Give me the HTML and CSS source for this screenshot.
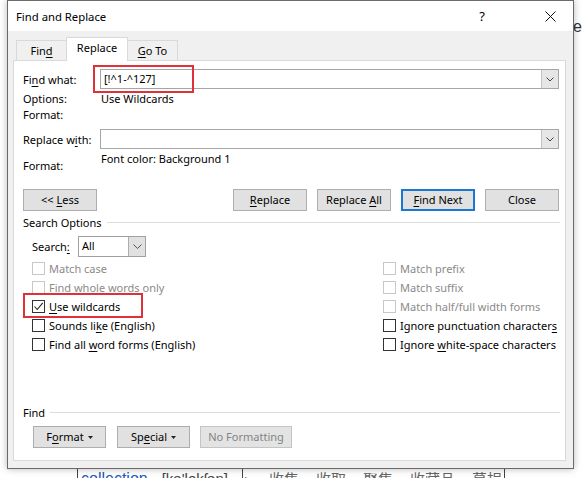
FILE: index.html
```html
<!DOCTYPE html>
<html>
<head>
<meta charset="utf-8">
<link rel="stylesheet" href="styles.css">
</head>
<body>
<div class="desktop">
  <div class="doc-top">ea</div>
  <div class="doc-bottom">
    <span class="doc-bar"></span>
    <span class="doc-link">collection</span>
    <span class="doc-phon">[kə'lekʃən]</span>
    <span class="doc-bar"></span>
    <span class="doc-arrow">▸</span>
    <span class="doc-cjk">收集</span>
    <span class="doc-cjk">收取</span>
    <span class="doc-cjk">聚集</span>
    <span class="doc-cjk">收藏品</span>
    <span class="doc-cjk">募捐</span>
    <span class="doc-bar"></span>
  </div>

  <div class="dialog">
    <div class="titlebar">
      <span class="title">Find and Replace</span>
      <span class="tb-help">?</span>
      <span class="tb-close"><svg width="11" height="11" viewBox="0 0 11 11"><path d="M0.5 0.5L10.5 10.5M10.5 0.5L0.5 10.5" stroke="#111" stroke-width="1"/></svg></span>
    </div>
    <div class="body">
      <div class="tabs">
        <div class="tab tab-find"><span>Fin<u>d</u></span></div>
        <div class="tab tab-active"><span>Replace</span></div>
        <div class="tab tab-goto"><span><u>G</u>o To</span></div>
      </div>
      <div class="page">
        <div class="mark mark-find"></div>
        <div class="mark mark-wild"></div>

        <div class="field-row">
          <span class="lbl">Fi<u>n</u>d what:</span>
          <div class="combo">
            <span class="combo-text">[!^1-^127]</span>
            <span class="combo-btn"><svg width="8" height="5" viewBox="0 0 8 5"><path d="M0.5 0.5L4 4L7.5 0.5" fill="none" stroke="#444" stroke-width="1"/></svg></span>
          </div>
        </div>
        <div class="info-row"><span class="lbl">Options:</span><span class="val">Use Wildcards</span></div>
        <div class="info-row"><span class="lbl">Format:</span><span class="val"></span></div>

        <div class="field-row field-replace">
          <span class="lbl">Replace w<u>i</u>th:</span>
          <div class="combo">
            <span class="combo-text"></span>
            <span class="combo-btn"><svg width="8" height="5" viewBox="0 0 8 5"><path d="M0.5 0.5L4 4L7.5 0.5" fill="none" stroke="#444" stroke-width="1"/></svg></span>
          </div>
        </div>
        <div class="format-row"><span class="lbl">Format:</span><span class="val">Font color: Background 1</span></div>

        <div class="btn-row">
          <button class="btn"><span>&lt;&lt; <u>L</u>ess</span></button>
          <div class="btn-group">
            <button class="btn"><span><u>R</u>eplace</span></button>
            <button class="btn"><span>Replace <u>A</u>ll</span></button>
            <button class="btn btn-default"><span><u>F</u>ind Next</span></button>
            <button class="btn"><span>Close</span></button>
          </div>
        </div>

        <div class="group-head"><span>Search Options</span></div>

        <div class="search-row">
          <span class="search-lbl">Search<u>:</u></span>
          <div class="combo combo-small">
            <span class="combo-text">All</span>
            <span class="combo-btn"><svg width="9" height="5" viewBox="0 0 9 5"><path d="M0.5 0.5L4.5 4.5L8.5 0.5" fill="none" stroke="#555" stroke-width="1"/></svg></span>
          </div>
        </div>

        <div class="checks">
          <div class="check-col">
            <div class="check disabled"><span class="box"></span><span>Match case</span></div>
            <div class="check disabled"><span class="box"></span><span>Find whole words only</span></div>
            <div class="check"><span class="box"><svg width="11" height="11" viewBox="0 0 11 11"><path d="M1.5 5.5L4.2 8.5L9.8 1.8" fill="none" stroke="#222" stroke-width="1.1"/></svg></span><span><u>U</u>se wildcards</span></div>
            <div class="check"><span class="box"></span><span>Sounds li<u>k</u>e (English)</span></div>
            <div class="check"><span class="box"></span><span>Find all <u>w</u>ord forms (English)</span></div>
          </div>
          <div class="check-col">
            <div class="check disabled"><span class="box"></span><span>Match prefix</span></div>
            <div class="check disabled"><span class="box"></span><span>Match suffix</span></div>
            <div class="check disabled"><span class="box"></span><span>Match half/full width forms</span></div>
            <div class="check"><span class="box"></span><span>Ignore punctuation character<u>s</u></span></div>
            <div class="check"><span class="box"></span><span>Ignore <u>w</u>hite-space characters</span></div>
          </div>
        </div>

        <div class="bottom">
          <div class="group-head group-find"><span>Find</span></div>
          <div class="bottom-btns">
            <button class="btn btn-menu"><span>F<u>o</u>rmat</span><svg width="5" height="3" viewBox="0 0 5 3"><path d="M0 0H5L2.5 3Z" fill="#222"/></svg></button>
            <button class="btn btn-menu"><span>Sp<u>e</u>cial</span><svg width="5" height="3" viewBox="0 0 5 3"><path d="M0 0H5L2.5 3Z" fill="#222"/></svg></button>
            <button class="btn btn-disabled"><span>No Formatting</span></button>
          </div>
        </div>
      </div>
    </div>
  </div>
</div>
</body>
</html>
```

FILE: styles.css
```css
* { box-sizing: border-box; }
html, body { margin: 0; padding: 0; }
body {
  width: 582px;
  height: 478px;
  overflow: hidden;
  background: #fff;
  font-family: "Noto Sans", "Open Sans", sans-serif;
  font-size: 11px;
  color: #000;
}
u { text-decoration: underline; text-underline-offset: 1.5px; text-decoration-thickness: 1px; }

.desktop { position: relative; width: 582px; height: 478px; overflow: hidden; background: #fff; }

.doc-top {
  position: absolute; left: 573px; top: 18px;
  font-family: "Liberation Sans", sans-serif; font-size: 16px; color: #333;
}
.doc-bottom {
  position: absolute; left: 77px; top: 469px;
  display: flex; align-items: flex-start;
  font-family: "Liberation Sans", "Noto Sans CJK SC", sans-serif; font-size: 16px; color: #555;
  line-height: 20px;
}
.doc-bar { width: 1px; height: 20px; background: #444; }
.doc-link { color: #2459b8; margin-left: 3px; }
.doc-phon { margin-left: 14px; color: #444; font-size: 15px; }
.doc-bar + .doc-arrow { margin-left: 2px; }
.doc-phon + .doc-bar { margin-left: 14px; }
.doc-arrow { font-size: 10px; color: #444; }
.doc-cjk { font-family: "Noto Sans CJK SC", sans-serif; font-size: 15px; margin-left: 17px; color: #666; }
.doc-arrow + .doc-cjk { margin-left: 19px; }
.doc-cjk + .doc-bar { margin-left: 2px; }

.dialog {
  position: absolute; left: 7px; top: 0;
  width: 567px; height: 469px;
  border: 1px solid #6a6a6a;
  background: #f0f0f0;
  display: flex; flex-direction: column;
  box-shadow: 0 0 7px rgba(0,0,0,0.28);
}
.titlebar {
  height: 30px; flex: none;
  background: #fff;
  display: flex; align-items: center;
  padding-left: 8px;
}
.title { font-size: 11.3px; color: #000; flex: 1; }
.tb-help { width: 46px; text-align: center; font-size: 13px; margin-right: 22px; }
.tb-close { width: 46px; display: flex; justify-content: center; align-items: center; }

.body {
  flex: 1;
  display: flex; flex-direction: column;
  padding: 6px 7px 7px 5px;
}
.tabs {
  height: 23px; flex: none;
  display: flex; align-items: flex-end;
  padding-left: 3px;
}
.tab {
  height: 20px;
  border: 1px solid #d9d9d9; border-bottom: none;
  background: #f0f0f0;
  display: flex; justify-content: center; align-items: center;
  padding-bottom: 1px;
  white-space: nowrap;
}
.tab-find { width: 51px; }
.tab-goto { width: 51px; margin-left: -1px; }
.tab-active {
  width: 62px; height: 24px; margin-left: -1px; margin-bottom: -1px;
  background: #fff; position: relative; z-index: 1;
  padding-bottom: 4px;
}

.page {
  flex: 1;
  position: relative;
  border: 1px solid #d9d9d9;
  background: #fff;
  display: flex; flex-direction: column;
  padding: 8px 6px 12px 9px;
  white-space: nowrap;
}
.mark { position: absolute; border: 2.5px solid #e0313b; }
.mark-find { left: 79px; top: 4px; width: 101px; height: 28px; }
.mark-wild { left: 9px; top: 232px; width: 120px; height: 25px; }

.field-row { display: grid; grid-template-columns: 77px 1fr; align-items: center; height: 20px; }
.field-replace { margin-top: 6px; }
.combo {
  height: 20px;
  border: 1px solid #a6a6a6;
  background: #fff;
  display: flex; align-items: stretch;
}
.combo-text { flex: 1; padding-left: 3px; line-height: 17px; position: relative; z-index: 2; }
.combo-btn {
  width: 17px; flex: none;
  background: #e6e6e6;
  border-left: 1px solid #c2c2c2;
  display: flex; align-items: center; justify-content: center;
}
.info-row { display: grid; grid-template-columns: 78px 1fr; height: 16px; line-height: 16px; }
.field-row + .info-row { margin-top: 2px; }
.format-row { display: grid; grid-template-columns: 78px 1fr; height: 26px; }
.format-row .lbl { padding-top: 9px; line-height: 16px; }
.format-row .val { padding-top: 2px; line-height: 16px; }

.btn-row { display: flex; justify-content: space-between; margin-top: 14px; }
.btn-group { display: flex; gap: 10px; }
.btn {
  width: 74px; height: 22px;
  font-family: inherit; font-size: 11px; color: #000;
  background: #e1e1e1;
  border: 1px solid #adadad;
  padding: 0 0 1px 0;
  display: flex; align-items: center; justify-content: center;
  white-space: pre;
}
.btn-default { border: 2px solid #1a78d4; }

.group-head { display: flex; align-items: center; height: 16px; margin-top: 3px; gap: 5px; }
.group-head::after { content: ""; flex: 1; height: 1px; background: #dcdcdc; margin-right: -1px; }

.search-row { display: flex; align-items: center; margin-top: 6px; padding-left: 9px; height: 21px; }
.search-lbl { width: 46px; }
.combo-small { width: 68px; height: 21px; border-color: #a0a0a0; }
.combo-small .combo-btn { width: 17px; background: #e1e1e1; border-left: 1px solid #adadad; }
.combo-small .combo-text { line-height: 18px; }

.checks { display: grid; grid-template-columns: 351px 1fr; margin-top: 2px; padding-left: 9px; }
.check { height: 19px; display: flex; align-items: center; gap: 4px; }
.check .box {
  width: 13px; height: 13px; flex: none;
  border: 1px solid #333;
  background: #fff;
  display: flex; align-items: center; justify-content: center;
}
.check.disabled { color: #8a8a8a; }
.check.disabled .box { border-color: #c8c8c8; }

.bottom { margin-top: auto; }
.group-find { margin-top: 0; }
.bottom-btns { display: flex; gap: 11px; margin-top: 6px; padding-left: 10px; }
.btn-menu { width: 73px; gap: 4px; }
.btn-menu svg { margin-top: 1px; }
.btn-disabled { width: 92px; color: #838383; background: #e3e3e3; border-color: #c4c4c4; margin-left: -1px; }
```
